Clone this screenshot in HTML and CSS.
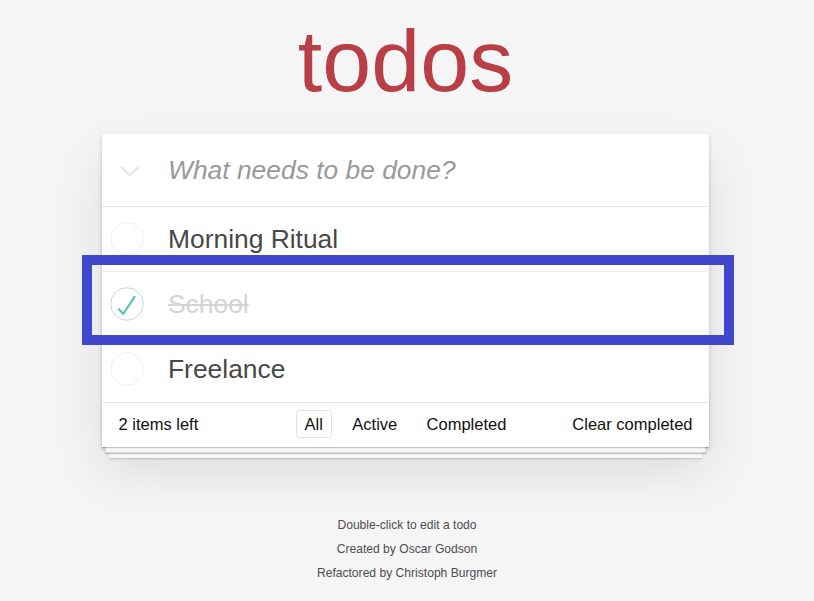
FILE: index.html
```html
<!DOCTYPE html>
<html lang="en">
<head>
<meta charset="utf-8">
<title>todos</title>
<link rel="stylesheet" href="styles.css">
</head>
<body>
<section class="todoapp">
  <h1 class="title">todos</h1>
  <div class="card">
    <header class="new-row">
      <span class="toggle-all">
        <svg width="20" height="10" viewBox="0 0 20 10"><polyline points="1,1 10,9 19,1" fill="none" stroke="#e3e3e3" stroke-width="2"/></svg>
      </span>
      <input class="new-todo" type="text" placeholder="What needs to be done?">
    </header>
    <ul class="todo-list">
      <li class="todo">
        <span class="check">
          <svg width="34" height="34" viewBox="0 0 34 34"><circle cx="17" cy="17" r="16.3" fill="none" stroke="#ededed" stroke-width="1"/></svg>
        </span>
        <label class="todo-label">Morning Ritual</label>
      </li>
      <li class="todo done">
        <span class="check">
          <svg width="34" height="34" viewBox="0 0 34 34"><circle cx="17" cy="17" r="16.3" fill="none" stroke="#bddad5" stroke-width="1"/><polyline points="8.3,21.8 13.3,26.8 25,9.2" fill="none" stroke="#5dc2af" stroke-width="2.2"/></svg>
        </span>
        <label class="todo-label">School</label>
      </li>
      <li class="todo">
        <span class="check">
          <svg width="34" height="34" viewBox="0 0 34 34"><circle cx="17" cy="17" r="16.3" fill="none" stroke="#ededed" stroke-width="1"/></svg>
        </span>
        <label class="todo-label">Freelance</label>
      </li>
    </ul>
    <footer class="footer">
      <span class="count">2 items left</span>
      <ul class="filters">
        <li><a class="filter selected" href="#/">All</a></li>
        <li><a class="filter" href="#/active">Active</a></li>
        <li><a class="filter" href="#/completed">Completed</a></li>
      </ul>
      <button class="clear">Clear completed</button>
    </footer>
  </div>
</section>
<footer class="info">
  <p>Double-click to edit a todo</p>
  <p>Created by <a href="#">Oscar Godson</a></p>
  <p>Refactored by <a href="#">Christoph Burgmer</a></p>
</footer>
<div class="highlight"></div>
</body>
</html>
```

FILE: styles.css
```css
html, body {
  margin: 0;
  padding: 0;
}

body {
  background: #f5f5f5;
  font-family: "Liberation Sans", Arial, sans-serif;
  color: #111111;
  min-height: 601px;
}

.todoapp {
  width: 607px;
  margin: 0 0 0 calc(50% - 305px);
}

.title {
  margin: 0 0 12px;
  font-size: 88px;
  line-height: 122px;
  font-weight: normal;
  color: #b83f45;
  text-align: center;
}

.card {
  background: #ffffff;
  box-shadow: 0 2px 4px rgba(0, 0, 0, 0.2), 0 25px 50px rgba(0, 0, 0, 0.1);
}

.new-row {
  display: flex;
  height: 72px;
  border-bottom: 1px solid #e6e6e6;
}

.toggle-all {
  width: 66px;
  display: flex;
  align-items: center;
  padding: 1px 0 0 18px;
  box-sizing: border-box;
}

.toggle-all svg {
  display: block;
}

.new-todo {
  flex: 1;
  min-width: 0;
  height: 72px;
  box-sizing: border-box;
  border: none;
  outline: none;
  background: transparent;
  padding: 1px 16px 0 0;
  font-family: inherit;
  font-size: 26.4px;
  color: #4d4d4d;
}

.new-todo::placeholder {
  font-style: italic;
  color: #999999;
}

.todo-list {
  list-style: none;
  margin: 0;
  padding: 0;
}

.todo {
  display: flex;
  align-items: center;
  height: 64px;
  padding-left: 8px;
  border-bottom: 1px solid #ededed;
}

.todo:last-child {
  height: 65px;
  box-sizing: border-box;
  padding-bottom: 2px;
  border-bottom: none;
}

.check {
  width: 34px;
  height: 34px;
}

.check svg {
  display: block;
}

.todo-label {
  margin-left: 24px;
  font-size: 26.4px;
  line-height: 32px;
  color: #484848;
}

.done .todo-label {
  color: #d4d4d4;
  text-decoration: line-through;
}

.footer {
  position: relative;
  display: grid;
  grid-template-columns: 1fr auto 1fr;
  align-items: center;
  height: 45px;
  box-sizing: border-box;
  padding: 0 16.5px 2px;
  border-top: 1px solid #e6e6e6;
  font-size: 16.5px;
  color: #111111;
}

.footer::before {
  content: "";
  position: absolute;
  left: 0;
  right: 0;
  bottom: 0;
  height: 50px;
  overflow: hidden;
  pointer-events: none;
  box-shadow: 0 1px 1px rgba(0, 0, 0, 0.2),
              0 8.8px 0 -3.3px #f6f6f6,
              0 9.9px 1px -3.3px rgba(0, 0, 0, 0.2),
              0 17.6px 0 -6.6px #f6f6f6,
              0 18.7px 2px -6.6px rgba(0, 0, 0, 0.2);
}

.count {
  justify-self: start;
}

.filters {
  display: flex;
  gap: 12px;
  list-style: none;
  margin: 0;
  padding: 0;
}

.filter {
  display: block;
  padding: 3.3px 7.7px;
  border: 1px solid transparent;
  border-radius: 3.3px;
  color: inherit;
  text-decoration: none;
  line-height: 19px;
}

.filter.selected {
  border-color: rgba(206, 70, 70, 0.2);
}

.clear {
  justify-self: end;
  background: none;
  border: none;
  padding: 0;
  margin: 0;
  font-family: inherit;
  font-size: 16.5px;
  color: #111111;
}

.info {
  margin-top: 71.5px;
  text-align: center;
  font-size: 12.1px;
  color: #4d4d4d;
}

.info p {
  margin: 0 0 12.1px;
  line-height: 12.1px;
}

.info a {
  color: inherit;
  text-decoration: none;
}

.highlight {
  position: absolute;
  left: 82px;
  top: 255px;
  width: 652px;
  height: 90px;
  box-sizing: border-box;
  border: 10px solid #3f48cc;
}
```
